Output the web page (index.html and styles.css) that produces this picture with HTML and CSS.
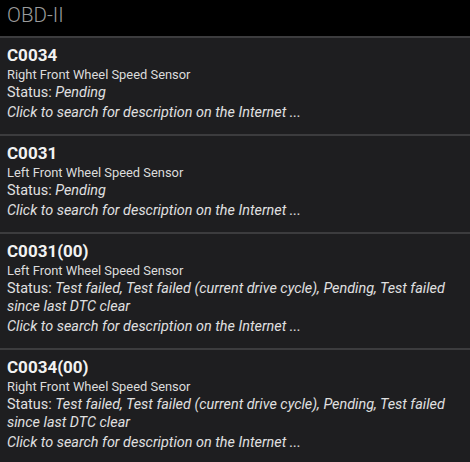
FILE: index.html
```html
<!DOCTYPE html>
<html>
<head>
<meta charset="utf-8">
<link rel="stylesheet" href="styles.css">
</head>
<body>
<div class="app">
  <header class="bar">OBD-II</header>
  <ul class="list">
    <li class="item">
      <div class="code">C0034</div>
      <div class="name">Right Front Wheel Speed Sensor</div>
      <div class="status">Status: <em>Pending</em></div>
      <div class="link"><em>Click to search for description on the Internet ...</em></div>
    </li>
    <li class="item">
      <div class="code">C0031</div>
      <div class="name">Left Front Wheel Speed Sensor</div>
      <div class="status">Status: <em>Pending</em></div>
      <div class="link"><em>Click to search for description on the Internet ...</em></div>
    </li>
    <li class="item">
      <div class="code">C0031(00)</div>
      <div class="name">Left Front Wheel Speed Sensor</div>
      <div class="status">Status: <em>Test failed, Test failed (current drive cycle), Pending, Test failed since last DTC clear</em></div>
      <div class="link"><em>Click to search for description on the Internet ...</em></div>
    </li>
    <li class="item">
      <div class="code">C0034(00)</div>
      <div class="name">Right Front Wheel Speed Sensor</div>
      <div class="status">Status: <em>Test failed, Test failed (current drive cycle), Pending, Test failed since last DTC clear</em></div>
      <div class="link"><em>Click to search for description on the Internet ...</em></div>
    </li>
  </ul>
</div>
</body>
</html>
```
FILE: styles.css
```css
* { box-sizing: border-box; }
html, body {
  margin: 0;
  padding: 0;
  background: #1e1e20;
  font-family: Roboto, "Liberation Sans", sans-serif;
}
.app {
  width: 470px;
  height: 462px;
  overflow: hidden;
  background: #1e1e20;
}
.bar {
  height: 38px;
  background: #000;
  border-bottom: 2px solid #3c3c3e;
  color: #9c9c9c;
  font-size: 20.5px;
  font-weight: 300;
  line-height: 31px;
  padding: 0 7px;
}
.list {
  list-style: none;
  margin: 0;
  padding: 0;
}
.item {
  padding: 6px 7px 12px;
  border-bottom: 2px solid #3c3c3e;
  color: #e2e2e2;
}
.code {
  font-size: 17px;
  font-weight: 700;
  line-height: 22px;
  color: #f2f2f2;
}
.name {
  font-size: 12.9px;
  line-height: 18px;
  color: #dcdcdc;
}
.status {
  font-size: 14.4px;
  line-height: 18px;
  color: #e0e0e0;
}
.link {
  font-size: 14.4px;
  line-height: 19px;
  margin-top: 1px;
  color: #e0e0e0;
}
em { font-style: italic; }
```
